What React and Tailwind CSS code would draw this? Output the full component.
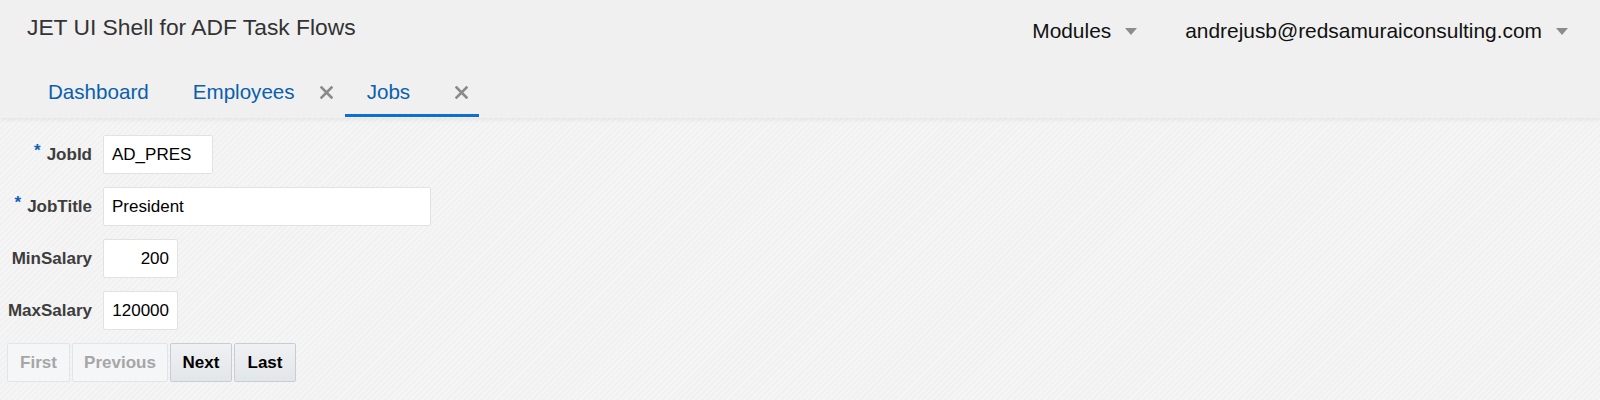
import React from "react";

const font = { fontFamily: '"Liberation Sans", Arial, sans-serif' };

function CloseIcon() {
  return (
    <svg width="13" height="13" viewBox="0 0 13 13" className="block">
      <path d="M1.5 1.5 L11.5 11.5 M11.5 1.5 L1.5 11.5" stroke="#8a8a8a" strokeWidth="2.6" strokeLinecap="square" />
    </svg>
  );
}

function Caret() {
  return (
    <svg width="12" height="7" viewBox="0 0 12 7" className="block">
      <path d="M0 0 L12 0 L6 7 Z" fill="#8c8c8c" />
    </svg>
  );
}

function Field({ label, required, value, width, right }) {
  return (
    <div className="flex items-center h-[39px]">
      <div className="w-[92px] text-right text-[17px] font-bold text-[#3d3d3d] whitespace-nowrap">
        {required && <span className="text-[#0a62b5] relative top-[-4px] mr-[6px]">*</span>}
        {label}
      </div>
      <div
        className={
          "ml-[11px] h-[39px] bg-white border border-[#dfe3e6] rounded-[2px] flex items-center px-[8px] text-[17px] text-black " +
          (right ? "justify-end" : "")
        }
        style={{ width }}
      >
        {value}
      </div>
    </div>
  );
}

export default function App() {
  return (
    <div className="w-[1600px] h-[400px] overflow-hidden bg-[repeating-linear-gradient(135deg,#f5f5f5_0px,#f5f5f5_2px,#f1f1f1_2px,#f1f1f1_4px)]" style={font}>
      {/* Header */}
      <div className="h-[118px] bg-[#f0f0f0] shadow-[0_2px_4px_rgba(0,0,0,0.06)] flex flex-col relative">
        <div className="flex justify-between">
          <div className="pl-[27px] pt-[14px] text-[22.8px] leading-[26px] text-[#333]">
            JET UI Shell for ADF Task Flows
          </div>
          <div className="flex items-center pt-[20px] pr-[32px] text-[20.9px] leading-[22px] text-[#111]">
            <span>Modules</span>
            <span className="ml-[14px]"><Caret /></span>
            <span className="ml-[48px]">andrejusb@redsamuraiconsulting.com</span>
            <span className="ml-[14px]"><Caret /></span>
          </div>
        </div>
        <div className="mt-auto mb-[1px] flex pl-[26px] text-[20.6px] text-[#0a5fae]">
          <div className="h-[44px] flex items-center pb-[3px] pl-[22px] pr-[22px] border-b-[3px] border-transparent">
            Dashboard
          </div>
          <div className="h-[44px] flex items-center pb-[3px] pl-[22px] pr-[12px] border-b-[3px] border-transparent">
            <span>Employees</span>
            <span className="ml-[25px]"><CloseIcon /></span>
          </div>
          <div className="h-[44px] w-[134px] flex items-center pb-[3px] pl-[22px] border-b-[3px] border-[#0f6fd0]">
            <span className="w-[62px]">Jobs</span>
            <span className="ml-[26px]"><CloseIcon /></span>
          </div>
        </div>
      </div>

      {/* Form */}
      <div className="pt-[17px] flex flex-col gap-[13px]">
        <Field label="JobId" required value="AD_PRES" width={110} />
        <Field label="JobTitle" required value="President" width={328} />
        <Field label="MinSalary" value="200" width={75} right />
        <Field label="MaxSalary" value="120000" width={75} right />
        <div className="flex gap-[2px] pl-[7px] text-[17px] font-bold">
          <button className="h-[39px] w-[63px] border border-[#e2e5e8] bg-[#f5f6f7] rounded-[2px] text-[#a6a6a6]">
            First
          </button>
          <button className="h-[39px] w-[96px] border border-[#e2e5e8] bg-[#f5f6f7] rounded-[2px] text-[#a6a6a6]">
            Previous
          </button>
          <button className="h-[39px] w-[62px] border border-[#c5ced6] bg-[linear-gradient(#eff1f3,#e3e6e9)] rounded-[2px] text-black">
            Next
          </button>
          <button className="h-[39px] w-[62px] border border-[#c5ced6] bg-[linear-gradient(#eff1f3,#e3e6e9)] rounded-[2px] text-black">
            Last
          </button>
        </div>
      </div>
    </div>
  );
}
